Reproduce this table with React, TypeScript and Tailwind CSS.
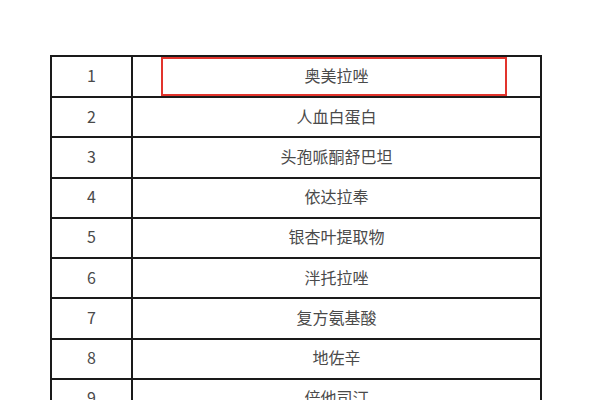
const drugs = [
  "奥美拉唑",
  "人血白蛋白",
  "头孢哌酮舒巴坦",
  "依达拉奉",
  "银杏叶提取物",
  "泮托拉唑",
  "复方氨基酸",
  "地佐辛",
  "倍他司汀",
]

export default function App() {
  return (
    <div className="w-[600px] h-[400px] overflow-hidden bg-white pt-[55px] pl-[50px] font-['Noto_Sans_CJK_SC','Noto_Sans',sans-serif] text-[16px] text-[#4a4a4a]">
      <div className="relative w-[492px] border-l-2 border-r-2 border-t-2 border-[#1a1a1a]">
        {drugs.map((name, i) => (
          <div
            key={i}
            className={`flex ${i > 0 ? "h-[40.25px] border-t-2 border-[#1a1a1a]" : "h-[39px]"}`}
          >
            <div className="w-[81px] flex items-center justify-center pb-[3px] border-r-2 border-[#1a1a1a]">{i + 1}</div>
            <div className="flex-1 flex items-center justify-center pb-[3px]">{name}</div>
          </div>
        ))}
        {/* highlight */}
        <div className="absolute left-[109px] top-[0px] w-[346px] h-[39px] border-2 border-[#e2342d]" />
      </div>
    </div>
  )
}
